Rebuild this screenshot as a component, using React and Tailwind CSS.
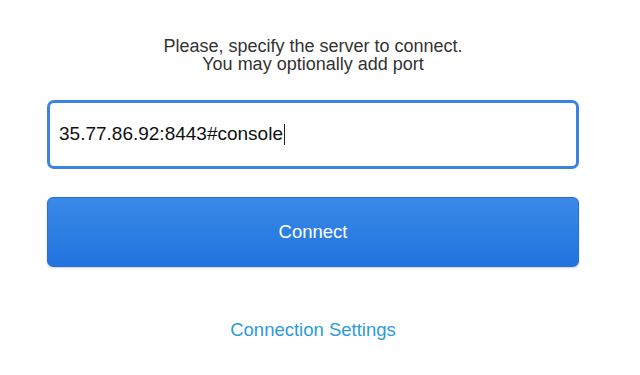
import React from "react";

const font = { fontFamily: '"Liberation Sans", Arial, sans-serif' };

const ConnectForm = () => {
  return (
    <div className="min-h-[375px] w-full bg-white" style={font}>
      <div className="ml-[47px] w-[532px] flex flex-col items-center pt-[37px]">
        <p className="text-[18px] leading-[18px] text-[#333333] text-center">
          Please, specify the server to connect.
          <br />
          You may optionally add port
        </p>

        <div className="mt-[27px] w-full h-[69px] border-[3px] border-[#3a83e4] rounded-[7px] flex items-center pl-[9px]">
          <span className="text-[19px] text-[#111111]">35.77.86.92:8443#console</span>
          <span className="ml-[1px] w-px h-[21px] bg-[#222222]" />
        </div>

        <button
          type="button"
          className="mt-[28px] w-full h-[70px] rounded-[6px] border border-[#2a6fcf] bg-gradient-to-b from-[#3a89e8] to-[#2074df] text-white text-[18.5px] shadow-[0_1px_2px_rgba(0,0,0,0.2)]"
        >
          Connect
        </button>

        <button type="button" className="mt-[49px] text-[18.5px] text-[#2b9bd8]">
          Connection Settings
        </button>
      </div>
    </div>
  );
};

export default function App() {
  return <ConnectForm />;
}
